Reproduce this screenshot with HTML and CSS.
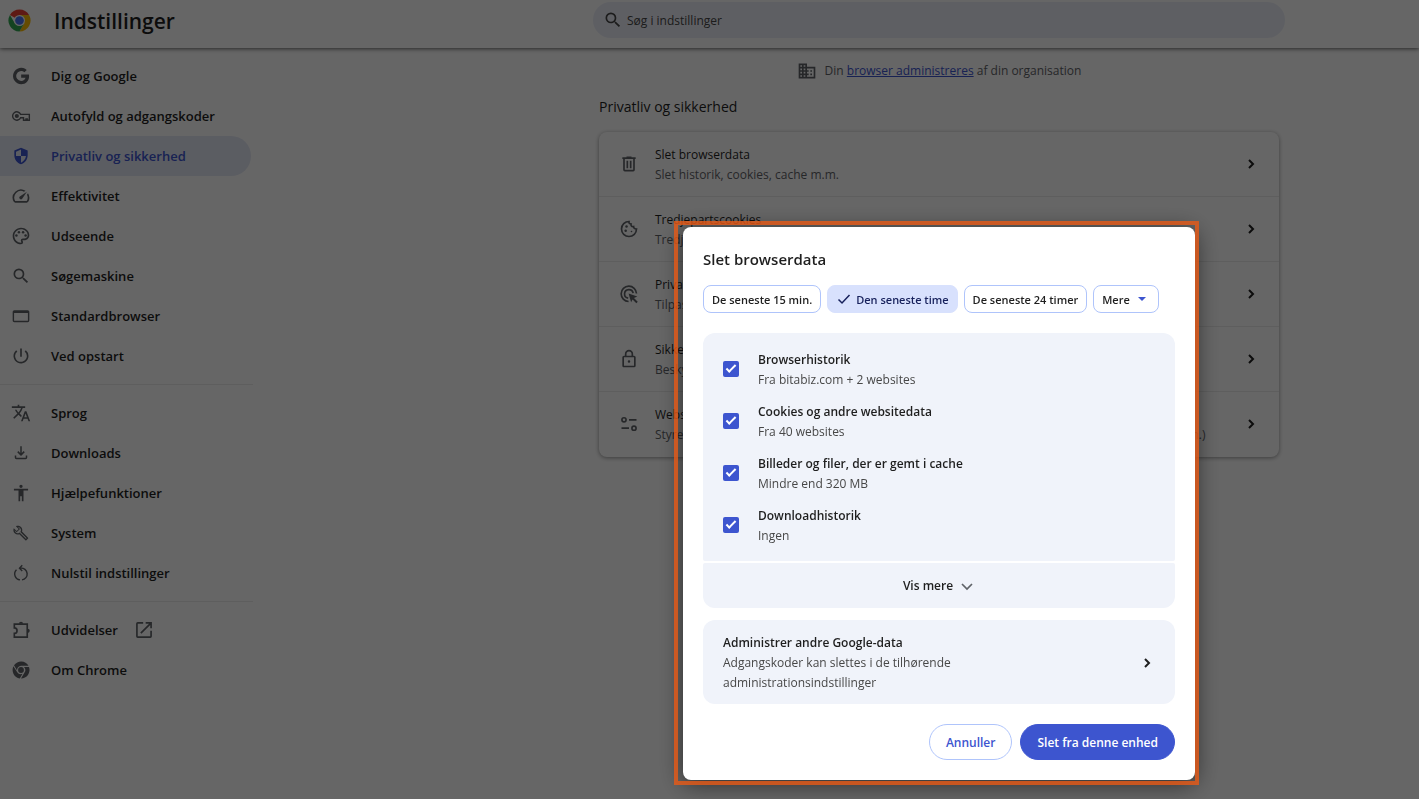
FILE: index.html
```html
<!DOCTYPE html>
<html lang="da">
<head>
  <meta charset="UTF-8" />
  <meta name="viewport" content="width=device-width, initial-scale=1" />
  <title>Indstillinger</title>
  <link rel="stylesheet" href="styles.css">
</head>
<body>

<header class="toolbar">
  <div class="brand">
    <svg class="logo" viewBox="1 1 46 46">
      <path fill="#ea4335" d="M24 24 4.9 13A22 22 0 0 1 43.1 13H24z"/>
      <path fill="#fbbc05" d="M24 13h19.1A22 22 0 0 1 24 46l9.5-16.5z"/>
      <path fill="#34a853" d="M4.9 13 14.5 29.5 24 35l9.5-5.5L24 46A22 22 0 0 1 4.9 13z"/>
      <circle cx="24" cy="24" r="11" fill="#fff"/>
      <circle cx="24" cy="24" r="8.7" fill="#4a74f0"/>
    </svg>
    <h1>Indstillinger</h1>
  </div>
  <div class="toolbar-main">
    <label class="search">
      <svg viewBox="0 0 24 24"><path d="M15.5 14h-.79l-.28-.27A6.47 6.47 0 0 0 16 9.5 6.5 6.5 0 1 0 9.5 16c1.61 0 3.09-.59 4.23-1.57l.27.28v.79l5 4.99L20.49 19l-4.99-5zm-6 0C7.01 14 5 11.99 5 9.5S7.01 5 9.5 5 14 7.01 14 9.5 11.99 14 9.5 14z"/></svg>
      <input type="search" placeholder="Søg i indstillinger" aria-label="Søg i indstillinger">
    </label>
  </div>
</header>

<div class="page">
  <nav class="sidebar">
    <a href="#"><svg viewBox="0 0 24 24"><path d="M21.5 10.3H12.2v3.7h5.2c-.5 2.3-2.5 3.9-5.2 3.9a5.9 5.9 0 1 1 3.9-10.3l2.8-2.8A9.8 9.8 0 1 0 12.2 21.8c5.6 0 9.5-3.9 9.5-9.6 0-.7-.1-1.3-.2-1.9z"/></svg>Dig og Google</a>
    <a href="#"><svg class="line thin" viewBox="0 0 24 24"><path d="M11.5 10A5 5 0 1 0 11.5 14H15V17H18V15.5H19.5V17H22V10z"/><circle class="solid" cx="7" cy="12" r="2.5"/></svg>Autofyld og adgangskoder</a>
    <a href="#" class="selected"><svg viewBox="0 0 24 24"><path d="M12 2 4 5.5v5.5c0 5 3.4 9.5 8 11 4.6-1.5 8-6 8-11V5.5zm0 10h6c-.5 3.5-3 6.8-6 8V12H6V6.8l6-2.7z"/></svg>Privatliv og sikkerhed</a>
    <a href="#"><svg viewBox="0 0 24 24"><path d="m20.38 8.57-1.23 1.85a8 8 0 0 1-.22 7.58H5.07A8 8 0 0 1 15.58 6.85l1.85-1.23A10 10 0 0 0 3.35 19a2 2 0 0 0 1.72 1h13.85a2 2 0 0 0 1.74-1 10 10 0 0 0-.27-10.44zm-9.79 6.84a2 2 0 0 0 2.83 0l5.66-8.49-8.49 5.66a2 2 0 0 0 0 2.83z"/></svg>Effektivitet</a>
    <a href="#"><svg viewBox="0 0 24 24"><path d="M12 22C6.49 22 2 17.51 2 12S6.49 2 12 2s10 4.04 10 9c0 3.31-2.69 6-6 6h-1.77c-.28 0-.5.22-.5.5 0 .12.05.23.13.33.41.47.64 1.06.64 1.67A2.5 2.5 0 0 1 12 22zm0-18c-4.41 0-8 3.59-8 8s3.59 8 8 8c.28 0 .5-.22.5-.5a.54.54 0 0 0-.14-.35c-.41-.46-.63-1.05-.63-1.65a2.5 2.5 0 0 1 2.5-2.5H16c2.21 0 4-1.79 4-4 0-3.86-3.59-7-8-7z"/><circle cx="6.5" cy="11.5" r="1.5"/><circle cx="9.5" cy="7.5" r="1.5"/><circle cx="14.5" cy="7.5" r="1.5"/><circle cx="17.5" cy="11.5" r="1.5"/></svg>Udseende</a>
    <a href="#"><svg viewBox="0 0 24 24"><path d="M15.5 14h-.79l-.28-.27A6.47 6.47 0 0 0 16 9.5 6.5 6.5 0 1 0 9.5 16c1.61 0 3.09-.59 4.23-1.57l.27.28v.79l5 4.99L20.49 19l-4.99-5zm-6 0C7.01 14 5 11.99 5 9.5S7.01 5 9.5 5 14 7.01 14 9.5 11.99 14 9.5 14z"/></svg>Søgemaskine</a>
    <a href="#"><svg viewBox="0 0 24 24"><path d="M20 5H4a2 2 0 0 0-2 2v10.5c0 1.1.9 2 2 2h16a2 2 0 0 0 2-2V7a2 2 0 0 0-2-2zm.3 12.8H3.7V8.5h16.6z"/></svg>Standardbrowser</a>
    <a href="#"><svg viewBox="0 0 24 24"><path d="M13 3h-2v10h2zm4.83 2.17-1.42 1.42A6.92 6.92 0 0 1 19 12c0 3.87-3.13 7-7 7A7 7 0 0 1 7.58 6.58L6.17 5.17A9 9 0 1 0 21 12a8.94 8.94 0 0 0-3.17-6.83z"/></svg>Ved opstart</a>
    <hr>
    <a href="#"><svg viewBox="0 0 24 24"><path d="m12.87 15.07-2.54-2.51.03-.03A17.52 17.52 0 0 0 14.07 6H17V4h-7V2H8v2H1v2h11.17C11.5 7.92 10.44 9.75 9 11.35 8.07 10.32 7.3 9.19 6.69 8h-2c.73 1.63 1.73 3.17 2.98 4.56l-5.09 5.02L4 19l5-5 3.11 3.11zM18.5 10h-2L12 22h2l1.12-3h4.75L21 22h2zm-2.62 7 1.62-4.33L19.12 17z"/></svg>Sprog</a>
    <a href="#"><svg viewBox="0 0 24 24"><path d="m12 15.5-4.5-4.5 1.3-1.3 2.3 2.3V4h1.8v8l2.3-2.3 1.3 1.3zM6.5 19.5a2 2 0 0 1-2-2V15h1.8v2.7h11.4V15h1.8v2.5a2 2 0 0 1-2 2z"/></svg>Downloads</a>
    <a href="#"><svg viewBox="0 0 24 24"><path d="M12 2a2 2 0 1 1 0 4 2 2 0 0 1 0-4zm8.5 7H15v13h-2v-6h-2v6H9V9H3.5V7h17z"/></svg>Hjælpefunktioner</a>
    <a href="#"><svg viewBox="-3 -3 30 30"><path d="M22.6 18.99 13.5 9.9c.9-2.3.4-5-1.5-6.9C9.9.9 6.8.5 4.3 1.7l4.2 4.2-3 3L1.2 4.7C0 7.2.6 10.3 2.6 12.4c1.9 1.9 4.6 2.4 6.9 1.5l9.1 9.1c.4.4 1 .4 1.4 0l2.6-2.6c.4-.4.4-1.1 0-1.41zm-3.3 1.6-9.5-9.5C7.5 13 5.4 12.5 4 11a5.3 5.3 0 0 1-1.5-3l3 3 5-5-3-3c1.1.1 2.1.6 3 1.5 1.7 1.7 1.9 4 .5 6.1l9.5 9.4z"/></svg>System</a>
    <a href="#"><svg class="line thin" viewBox="0 0 24 24"><path d="M10.8 20.2A7 7 0 0 1 6.6 8.2M13.2 20.2A7 7 0 0 0 11.5 6.2M13.5 2.8 10.2 6.2 13.5 9.5"/></svg>Nulstil indstillinger</a>
    <hr>
    <a href="#"><svg class="line" viewBox="0 0 24 24"><path d="M4 5H19.5V20.5H4V16A3 3 0 0 0 4 9.5z"/><path class="solid" d="M9.5 4.5a2.5 2.5 0 0 1 5 0zM20 10.5a2.5 2.5 0 0 1 0 5z"/></svg>Udvidelser
      <svg class="external" viewBox="0 0 24 24"><path d="M19.5 19.5h-15v-15H11v-2H4.5a2 2 0 0 0-2 2v15a2 2 0 0 0 2 2h15a2 2 0 0 0 2-2V13h-2zM14 2.5v2h4.090L7.500 15.100l1.410 1.410L19.500 5.910V10h2V2.500z"/></svg></a>
    <a href="#"><svg viewBox="0 0 24 24"><circle cx="12" cy="12" r="3.5"/><path d="M12 7h9A10.3 10.3 0 0 0 3.6 6.2L7.3 12.5A5 5 0 0 1 12 7zM2.9 7.5a10.3 10.3 0 0 0 7.6 14.6l3.3-5.5a5 5 0 0 1-6.3-2zM21.6 8.5h-6a5 5 0 0 1 .8 6.2L12 22.3A10.3 10.3 0 0 0 21.6 8.5z"/></svg>Om Chrome</a>
  </nav>

  <main class="content">
    <p class="managed">
      <svg viewBox="0 0 24 24"><path d="M12 7V3H2v18h20V7zM6 19H4v-2h2zm0-4H4v-2h2zm0-4H4V9h2zm0-4H4V5h2zm4 12H8v-2h2zm0-4H8v-2h2zm0-4H8V9h2zm0-4H8V5h2zm10 12h-8v-2h2v-2h-2v-2h2v-2h-2V9h8zm-2-8h-2v2h2zm0 4h-2v2h2z"/></svg>
      <span>Din <a href="#">browser administreres</a> af din organisation</span>
    </p>
    <h2>Privatliv og sikkerhed</h2>
    <div class="card">
      <a class="row" href="#">
        <svg viewBox="0 0 24 24"><path d="M15 4V3H9v1H4v2h1v13a2 2 0 0 0 2 2h10a2 2 0 0 0 2-2V6h1V4zm2 15H7V6h10zM9 8h2v9H9zm4 0h2v9h-2z"/></svg>
        <div class="row-text"><h3>Slet browserdata</h3><p>Slet historik, cookies, cache m.m.</p></div>
        <svg class="chevron" viewBox="0 0 24 24"><path d="m9 6 6 6-6 6"/></svg>
      </a>
      <a class="row" href="#">
        <svg class="line" viewBox="0 0 24 24"><path d="M12 3a9 9 0 1 0 9 9c-2 .3-3.5-1-3.5-3C15 9.5 14 8 14.5 6 12.5 6 11.5 4.5 12 3z"/><circle class="solid" cx="9" cy="9" r="1.5"/><circle class="solid" cx="8" cy="14" r="1.5"/><circle class="solid" cx="15" cy="15" r="1"/></svg>
        <div class="row-text"><h3>Tredjepartscookies</h3><p>Tredjepartscookies er blokeret i inkognitotilstand</p></div>
        <svg class="chevron" viewBox="0 0 24 24"><path d="m9 6 6 6-6 6"/></svg>
      </a>
      <a class="row" href="#">
        <svg class="line" viewBox="0 0 24 24"><path d="M21 11.5A9.2 9.2 0 1 0 11.5 21M17 11A5.2 5.2 0 1 0 11 17"/><path class="solid" d="m11.5 11.5 10.5 3.5-4 1.8 4.5 4.5-1.7 1.7-4.5-4.5-1.8 3.5z"/></svg>
        <div class="row-text"><h3>Privatliv og annoncer</h3><p>Tilpas de oplysninger, som websites bruger til at vise dig annoncer</p></div>
        <svg class="chevron" viewBox="0 0 24 24"><path d="m9 6 6 6-6 6"/></svg>
      </a>
      <a class="row" href="#">
        <svg viewBox="0 0 24 24"><path d="M18 8h-1V6A5 5 0 0 0 7 6v2H6a2 2 0 0 0-2 2v10c0 1.1.9 2 2 2h12a2 2 0 0 0 2-2V10a2 2 0 0 0-2-2zM9 6a3 3 0 0 1 6 0v2H9zm9 14H6V10h12zm-6-3.5a1.5 1.5 0 1 0 0-3 1.5 1.5 0 0 0 0 3z"/></svg>
        <div class="row-text"><h3>Sikkerhed</h3><p>Beskyttelse mod farlige websites og andre sikkerhedsindstillinger</p></div>
        <svg class="chevron" viewBox="0 0 24 24"><path d="m9 6 6 6-6 6"/></svg>
      </a>
      <a class="row" href="#">
        <svg class="line" viewBox="0 0 24 24"><circle cx="6" cy="7" r="2.5"/><circle cx="18" cy="17" r="2.5"/><path d="M12 7h9M3 17h9"/></svg>
        <div class="row-text"><h3>Websiteindstillinger</h3><p>Styrer, hvilke oplysninger websites kan bruge og få vist (placeringer, kamera, pop op-vinduer m.m.)</p></div>
        <svg class="chevron" viewBox="0 0 24 24"><path d="m9 6 6 6-6 6"/></svg>
      </a>
    </div>
  </main>
</div>

<div class="overlay">
  <div class="dialog" role="dialog" aria-labelledby="dialogTitle">
    <h2 id="dialogTitle">Slet browserdata</h2>

    <div class="chips">
      <button type="button" class="chip">De seneste 15 min.</button>
      <button type="button" class="chip active"><svg viewBox="0 0 16 16"><path d="m2.5 8.5 3.5 3.5L13.5 4"/></svg>Den seneste time</button>
      <button type="button" class="chip">De seneste 24 timer</button>
      <div class="chip-select">
        <select class="chip" aria-label="Mere"><option>Mere</option></select>
        <svg viewBox="0 0 8 4"><path d="M0 0h8L4 4z"/></svg>
      </div>
    </div>

    <div class="options">
      <label class="option">
        <input type="checkbox" checked>
        <span><b>Browserhistorik</b><small>Fra bitabiz.com + 2 websites</small></span>
      </label>
      <label class="option">
        <input type="checkbox" checked>
        <span><b>Cookies og andre websitedata</b><small>Fra 40 websites</small></span>
      </label>
      <label class="option">
        <input type="checkbox" checked>
        <span><b>Billeder og filer, der er gemt i cache</b><small>Mindre end 320 MB</small></span>
      </label>
      <label class="option">
        <input type="checkbox" checked>
        <span><b>Downloadhistorik</b><small>Ingen</small></span>
      </label>
    </div>
    <button type="button" class="show-more">Vis mere <svg viewBox="0 0 16 16"><path d="m3 6 5 5 5-5"/></svg></button>

    <a class="manage" href="#">
      <span><b>Administrer andre Google-data</b><small>Adgangskoder kan slettes i de tilhørende administrationsindstillinger</small></span>
      <svg class="chevron" viewBox="0 0 24 24"><path d="m9 6 6 6-6 6"/></svg>
    </a>

    <div class="actions">
      <button type="button" class="btn">Annuller</button>
      <button type="button" class="btn primary">Slet fra denne enhed</button>
    </div>
  </div>
</div>

</body>
</html>
```
FILE: styles.css
```css
* {
  box-sizing: border-box;
}
body {
  margin: 0;
  font-family: 'Segoe UI', 'Open Sans', 'Noto Sans', sans-serif;
  font-size: 12px;
  line-height: 20px;
  color: #1f1f1f;
  background: #fff;
  overflow: hidden;
}
h1, h2, h3, p {
  margin: 0;
}
a {
  color: inherit;
  text-decoration: none;
}
button, input, select {
  font-family: inherit;
}
svg {
  flex-shrink: 0;
  width: 20px;
  height: 20px;
  fill: #5f6368;
}
svg.line {
  fill: none;
  stroke: #5f6368;
  stroke-width: 2;
}
svg.thin {
  stroke-width: 1.7;
}
svg .solid {
  fill: #5f6368;
  stroke: none;
}
svg.chevron {
  width: 16px;
  height: 16px;
  fill: none;
  stroke: #1f1f1f;
  stroke-width: 3;
}

/* toolbar */
.toolbar {
  position: relative;
  display: flex;
  height: 48px;
  box-shadow: 0 1px 4px rgba(0, 0, 0, 0.6);
}
.brand {
  display: flex;
  align-items: center;
  gap: 23px;
  width: 459px;
  padding: 0 8px 7px;
}
.brand .logo {
  width: 23px;
  height: 23px;
}
.brand h1 {
  font-size: 21px;
  line-height: 28px;
  font-weight: 600;
}
.toolbar-main {
  flex: 1;
  display: flex;
  justify-content: center;
  padding-top: 2px;
}
.search {
  display: flex;
  align-items: center;
  gap: 2px;
  width: 692px;
  height: 36px;
  padding: 0 10px;
  border-radius: 18px;
  background: #ebeef8;
}
.search svg {
  fill: #474747;
}
.search input {
  flex: 1;
  border: none;
  outline: none;
  background: none;
  font-size: 12px;
}
.search input::placeholder {
  color: #474747;
}

/* layout */
.page {
  display: flex;
}
.sidebar {
  width: 253px;
  padding-top: 8px;
}
.sidebar a {
  display: flex;
  align-items: center;
  gap: 20px;
  height: 40px;
  padding-left: 11px;
  margin-right: 2px;
  border-radius: 0 20px 20px 0;
  font-size: 13px;
  font-weight: 600;
}
.sidebar a.selected {
  background: #e4e8f5;
  color: #3d55cf;
}
.sidebar a.selected svg {
  fill: #3d55cf;
}
.sidebar .external {
  margin-left: -4px;
}
.sidebar hr {
  margin: 8px 0;
  border: none;
  border-top: 1px solid #ebebeb;
}
.content {
  flex: 1;
  padding: 13px 0 0 206px;
}
.content > * {
  width: 680px;
  margin: 0 auto;
}
.managed {
  display: flex;
  align-items: center;
  justify-content: center;
  gap: 8px;
  color: #5f6368;
}
.managed a {
  color: #3d55cf;
  text-decoration: underline;
}
.content h2 {
  margin-top: 16px;
  margin-bottom: 15px;
  font-size: 14px;
  font-weight: 400;
}
.card {
  border-radius: 8px;
  box-shadow: 0 1px 4px rgba(0, 0, 0, 0.4);
}
.row {
  display: flex;
  align-items: center;
  gap: 16px;
  height: 65px;
  padding: 0 20px;
  border-bottom: 1px solid #ebebeb;
}
.row:last-child {
  border-bottom-color: transparent;
}
.row-text {
  flex: 1;
  padding-top: 2px;
  white-space: nowrap;
}
.row h3 {
  font-size: 12px;
  font-weight: 400;
}
.row p {
  color: #5f6368;
}

/* dialog */
.overlay {
  position: fixed;
  top: 0; left: 0;
  width: 100%; height: 100%;
  padding: 227px 0 0 459px;
  background: rgba(0, 0, 0, 0.6);
}
.dialog {
  position: relative;
  width: 512px;
  margin: 0 auto;
  padding: 20px;
  border-radius: 8px;
  background: #fff;
  box-shadow: 0 4px 24px rgba(0, 0, 0, 0.6);
}
/* orange marker frame around the dialog */
.dialog::after {
  content: '';
  position: absolute;
  top: -6px; right: -4px;
  bottom: -5px; left: -9px;
  border: 4px solid rgba(232, 90, 22, 0.8);
  pointer-events: none;
}
.dialog h2 {
  font-size: 15px;
  line-height: 24px;
  font-weight: 600;
}
.dialog b, .dialog small {
  display: block;
  font-size: 12px;
  font-weight: 600;
}
.dialog small {
  font-weight: 400;
  color: #474747;
}
.chips {
  display: flex;
  gap: 6px;
  margin: 14px 0 20px;
}
.chip {
  display: flex;
  align-items: center;
  gap: 4px;
  height: 28px;
  padding: 0 8px;
  border: 1px solid #afc4fb;
  border-radius: 8px;
  background: #fff;
  color: #1f1f1f;
  font-size: 11px;
  font-weight: 600;
  white-space: nowrap;
}
.chip.active {
  border-color: #d8e1fd;
  background: #d8e1fd;
  color: #17215c;
}
.chip svg {
  width: 16px;
  height: 16px;
  fill: none;
  stroke: #17215c;
  stroke-width: 1.5;
}
.chip-select {
  position: relative;
}
.chip-select select {
  appearance: none;
  padding-right: 28px;
}
.chip-select svg {
  position: absolute;
  top: 12px; right: 13px;
  width: 8px;
  height: 4px;
  fill: #3d55cf;
  pointer-events: none;
}
.options {
  padding: 10px 20px;
  border-radius: 12px 12px 2px 2px;
  background: #f0f3fa;
}
.option {
  display: flex;
  align-items: center;
  gap: 19px;
  height: 52px;
}
.option span {
  padding-top: 2px;
}
.option input {
  appearance: none;
  display: grid;
  place-items: center;
  width: 16px;
  height: 16px;
  margin: 0;
  border-radius: 2px;
  background: #3d55cf;
}
.option input:checked::before {
  content: '';
  width: 8px;
  height: 3px;
  margin-bottom: 3px;
  border: solid #fff;
  border-width: 0 0 2px 2px;
  transform: rotate(-45deg);
}
.show-more {
  display: flex;
  align-items: center;
  justify-content: center;
  gap: 6px;
  width: 100%;
  height: 45px;
  margin-top: 2px;
  border: none;
  border-radius: 2px 2px 12px 12px;
  background: #f0f3fa;
  color: #1f1f1f;
  font-size: 12px;
  font-weight: 600;
}
.show-more svg {
  width: 16px;
  height: 16px;
  fill: none;
  stroke: #5f6368;
  stroke-width: 1.7;
}
.manage {
  display: flex;
  align-items: center;
  justify-content: space-between;
  margin-top: 12px;
  padding: 13px 20px 11px;
  border-radius: 12px;
  background: #f0f3fa;
}
.manage span {
  max-width: 300px;
}
.actions {
  display: flex;
  justify-content: flex-end;
  gap: 8px;
  margin-top: 20px;
}
.btn {
  height: 36px;
  padding: 0 16px;
  border: 1px solid #afc4fb;
  border-radius: 18px;
  background: #fff;
  color: #3d55cf;
  font-size: 12px;
  font-weight: 600;
}
.btn.primary {
  border-color: #3d55cf;
  background: #3d55cf;
  color: #fff;
}
```
